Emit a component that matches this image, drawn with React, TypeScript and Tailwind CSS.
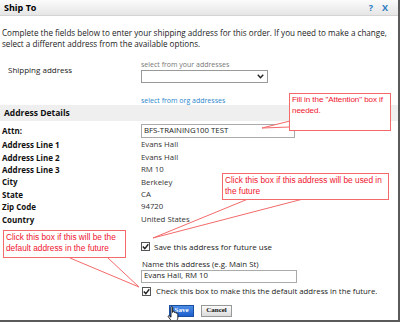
import React from "react";

const rows: [string, string][] = [
  ["Address Line 1", "Evans Hall"],
  ["Address Line 2", "Evans Hall"],
  ["Address Line 3", "RM 10"],
  ["City", "Berkeley"],
  ["State", "CA"],
  ["Zip Code", "94720"],
  ["Country", "United States"],
];

function Check() {
  return (
    <span className="flex h-[9px] w-[9px] items-center justify-center border border-[#555] bg-white">
      <svg width="7" height="7" viewBox="0 0 7 7">
        <path d="M0.8 3.6 L2.8 5.6 L6.3 1.2" fill="none" stroke="#222" strokeWidth="1.4" />
      </svg>
    </span>
  );
}

export default function App() {
  return (
    <div
      className="relative h-[322px] w-[400px] overflow-hidden border-b-2 border-r-2 border-[#5a5a5a] bg-white text-[#222]"
      style={{ fontFamily: '"Open Sans", "Noto Sans", sans-serif' }}
    >
      {/* title bar */}
      <div className="flex h-[16px] items-center justify-between border-b border-[#d4d4d4] bg-gradient-to-b from-[#fbfbfb] to-[#e6e6e6] pl-[4px] pr-[10px]">
        <span className="text-[9px] font-bold text-black">Ship To</span>
        <div className="flex gap-[9px] text-[9px] font-bold text-[#2a7cc0]">
          <span>?</span>
          <span>X</span>
        </div>
      </div>

      {/* intro */}
      <div className="mt-[11px] pl-[2px] pr-[4px] text-[8.1px] leading-[11px] text-[#222]">
        Complete the fields below to enter your shipping address for this order. If you need to make a change,
        select a different address from the available options.
      </div>

      {/* shipping address */}
      <div className="mt-[12px] flex">
        <div className="w-[141px] pl-[8px] pt-[3px] text-[8px] leading-[11px]">Shipping address</div>
        <div className="flex flex-col">
          <span className="text-[7px] leading-[8px] text-[#777]">select from your addresses</span>
          <div className="mt-[1px] flex h-[13px] w-[127px] items-center justify-end border border-[#999] bg-white pr-[3px]">
            <svg width="7" height="5" viewBox="0 0 7 5">
              <path d="M0.8 0.8 L3.5 3.8 L6.2 0.8" fill="none" stroke="#222" strokeWidth="1.4" />
            </svg>
          </div>
          <span className="mt-[14px] text-[7px] leading-[8px] text-[#2a86cc]">select from org addresses</span>
        </div>
      </div>

      {/* address details band */}
      <div className="flex h-[16px] items-center bg-[#efefef] pl-[4px] text-[8.5px] font-bold text-[#111]">
        Address Details
      </div>

      {/* attn */}
      <div className="mt-[3px] flex h-[14px] items-center">
        <div className="w-[141px] pl-[2px] text-[8px] font-bold text-[#111]">Attn:</div>
        <div className="flex h-[14px] w-[154px] items-center border border-[#aaa] pl-[2px] text-[7.8px]">
          BFS-TRAINING100 TEST
        </div>
      </div>

      <div className="mt-[1px] flex flex-col">
        {rows.map(([k, v]) => (
          <div key={k} className="flex h-[12.4px] items-center">
            <div className="w-[141px] pl-[2px] text-[8px] font-bold text-[#111]">{k}</div>
            <div className="text-[7.8px] text-[#333]">{v}</div>
          </div>
        ))}
      </div>

      {/* save checkbox */}
      <div className="ml-[141px] mt-[16px] flex h-[10px] items-center gap-[4px] text-[8px]">
        <Check />
        <span>Save this address for future use</span>
      </div>

      <div className="ml-[142px] mt-[7px] text-[7.8px] leading-[10px]">Name this address (e.g. Main St)</div>
      <div className="ml-[141px] mt-[1px] flex h-[13px] w-[156px] items-center border border-[#aaa] pl-[2px] text-[7.8px]">
        Evans Hall, RM 10
      </div>

      <div className="ml-[142px] mt-[4px] flex h-[10px] items-center gap-[5px] text-[7.8px]">
        <Check />
        <span>Check this box to make this the default address in the future.</span>
      </div>

      <div className="ml-[169px] mt-[8px] flex gap-[7px]">
        <div
          className="flex h-[12px] w-[25px] items-center justify-center border border-[#1b4fa0] bg-gradient-to-b from-[#4d8ee8] to-[#1d5fcc] text-[7px] font-bold text-white"
          style={{ fontFamily: '"Liberation Serif", serif' }}
        >
          Save
        </div>
        <div
          className="flex h-[12px] w-[31px] items-center justify-center border border-[#999] bg-gradient-to-b from-[#fafafa] to-[#dcdcdc] text-[7px] font-bold text-[#111]"
          style={{ fontFamily: '"Liberation Serif", serif' }}
        >
          Cancel
        </div>
      </div>

      {/* callout tails */}
      <svg className="pointer-events-none absolute left-0 top-0" width="400" height="322">
        <g stroke="#f46a6a" strokeWidth="1" fill="none">
          <path d="M290 121 L262 128 L290 127" fill="#fff" />
          <path d="M248 199 L153 238 M303 199 L153 238" />
          <path d="M70 258 L139 287 M108 258 L139 287" />
        </g>
      </svg>

      {/* callouts */}
      <div
        className="absolute left-[289px] top-[93px] h-[38px] w-[102px] border border-[#f46a6a] bg-white pl-[2px] pt-[1px] text-[8.1px] leading-[10.5px] tracking-[-0.1px] text-[#f0142e]"
        style={{ fontFamily: '"Liberation Sans", Arial, sans-serif' }}
      >
        Fill in the "Attention" box if needed.
      </div>
      <div
        className="absolute left-[222px] top-[173px] h-[27px] w-[167px] border border-[#f46a6a] bg-white px-[2px] pt-[1px] text-[8.3px] leading-[10.5px] text-[#f0142e]"
        style={{ fontFamily: '"Liberation Sans", Arial, sans-serif' }}
      >
        Click this box if this address will be used in the future
      </div>
      <div
        className="absolute left-[3px] top-[230px] h-[28px] w-[123px] border border-[#f46a6a] bg-white px-[2px] pt-[1px] text-[8.3px] leading-[10.5px] text-[#f0142e]"
        style={{ fontFamily: '"Liberation Sans", Arial, sans-serif' }}
      >
        Click this box if this will be the default address in the future
      </div>

      {/* hand cursor */}
      <svg className="pointer-events-none absolute left-[167px] top-[306px]" width="13" height="16" viewBox="0 0 13 16">
        <path
          d="M4 1.2 C4 0.4 5.6 0.4 5.6 1.2 L5.6 6.5 L5.8 5.6 C6 5 7.3 5 7.4 5.8 L7.5 6.6 C7.7 6 9 6 9.1 6.8 L9.2 7.4 C9.4 6.9 10.7 7 10.8 7.8 L10.9 11 C10.9 13 10 14 9.6 15.5 L4.6 15.5 C4 14 2.6 12.6 1.4 10.9 C0.8 10 1.6 9.3 2.4 9.9 L4 11.2 Z"
          fill="#fff"
          stroke="#111"
          strokeWidth="0.9"
        />
      </svg>
    </div>
  );
}
